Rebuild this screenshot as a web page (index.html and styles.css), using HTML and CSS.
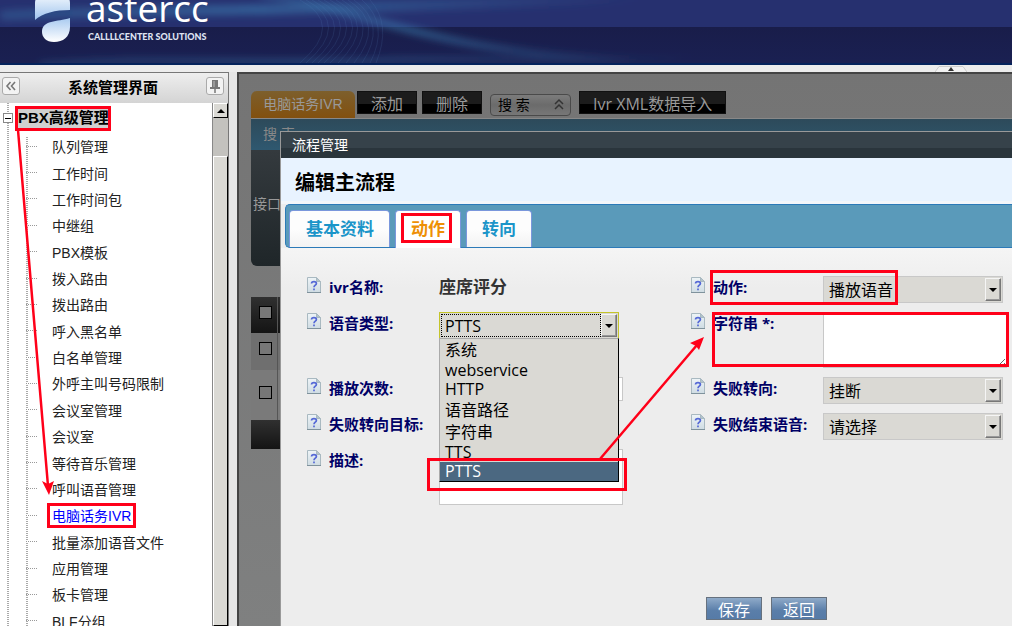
FILE: index.html
```html
<!DOCTYPE html>
<html lang="zh-CN">

<head>
  <meta charset="UTF-8">
  <title>astercc</title>
  <link rel="stylesheet" href="styles.css">
</head>

<body>
  <svg class="symbols" aria-hidden="true">
    <linearGradient id="paper" x2="0" y2="1">
      <stop offset="0" stop-color="#eef4f7" />
      <stop offset="1" stop-color="#cfdce3" />
    </linearGradient>
    <symbol id="help" viewBox="0 0 14 16">
      <path d="M.5 .5H9.500L13.500 4.500V15.500H.5z" fill="url(#paper)" stroke="#a9b9c1" />
      <path d="M9.500 .5V4.500H13.500z" fill="#b3c3cb" stroke="#a9b9c1" />
      <path d="M0 15.500H14" stroke="#7f929c" />
      <path d="M4.500 6.500C4.500 3.900 9.400 3.900 9.400 6.500C9.400 8.200 7 8.200 7 10.300M7 11.500V13.300" fill="none" stroke="#5468d6" stroke-width="1.700" />
    </symbol>
  </svg>

  <header class="banner">
    <svg class="waves" viewBox="0 0 1012 65" preserveAspectRatio="none" aria-hidden="true">
      <defs>
        <linearGradient id="waveFade">
          <stop offset="0" stop-color="#3f86b8" stop-opacity=".3" />
          <stop offset=".4" stop-color="#3f86b8" stop-opacity=".5" />
          <stop offset="1" stop-color="#3f86b8" stop-opacity="0" />
        </linearGradient>
        <filter id="soft" x="-10%" y="-100%" width="120%" height="300%">
          <feGaussianBlur stdDeviation="4" />
        </filter>
      </defs>
      <g filter="url(#soft)" fill="none" stroke="url(#waveFade)">
        <path d="M0 16C120 10 240 12 400 6S560 2 640 -4" stroke-width="11" />
        <path d="M260 -6C360 8 440 58 640 62" stroke-width="8" />
        <path d="M40 66C160 58 240 66 380 62S600 66 700 58" stroke-width="4" />
      </g>
      <g fill="none" stroke="#5c86c0" stroke-opacity=".16">
        <path d="M300 0Q345 25 300 65M306 0Q351 25 306 65M312 0Q357 25 312 65M318 0Q363 25 318 65M324 0Q369 25 324 65M330 0Q375 25 330 65M336 0Q378 25 338 65M342 0Q382 25 346 65M348 0Q386 25 354 65M354 0Q388 25 362 65M362 0Q390 25 370 65M370 0Q392 25 376 65" />
      </g>
    </svg>
    <div class="brand">
      <svg class="brand-mark" viewBox="0 0 36 42" aria-hidden="true">
        <defs>
          <linearGradient id="markTop" x2="0" y2="1">
            <stop offset="0" stop-color="#eef5fc" />
            <stop offset="1" stop-color="#9fc4ee" />
          </linearGradient>
          <linearGradient id="markBottom" x2="0" y2="1">
            <stop offset="0" stop-color="#a8caf0" />
            <stop offset="1" stop-color="#fff" />
          </linearGradient>
        </defs>
        <path d="M0 20V3Q0 0 2 -4H33Q35 0 35 3V10C20 10 8 13 0 20z" fill="url(#markTop)" />
        <path d="M35 18V27C35 37 28 42 19 42C11 42 7 37 7 32C7 20 22 22 35 18z" fill="url(#markBottom)" />
      </svg>
      <div class="brand-text">
        <div class="brand-name">astercc</div>
        <div class="brand-tag">CALLLLCENTER SOLUTIONS</div>
      </div>
    </div>
  </header>

  <div class="divider">
    <button class="collapse-up" aria-label="收起">
      <svg width="32" height="6" viewBox="0 0 32 6"><path d="M0 6L4 .5H28L32 6" fill="#f1f1f1" stroke="#ccc" /><path d="M13 5L16 1L19 5z" fill="#333" /></svg>
    </button>
  </div>

  <div class="layout">
    <aside class="sidebar">
      <div class="sidebar-header">
        <button class="tool" aria-label="折叠">
          <svg width="16" height="16" viewBox="0 0 16 16"><path d="M7.500 4L4 8L7.500 12M12 4L8.500 8L12 12" fill="none" stroke="#777" stroke-width="1.600" /></svg>
        </button>
        <h1>系统管理界面</h1>
        <button class="tool" aria-label="固定">
          <svg width="16" height="16" viewBox="0 0 16 16"><path d="M5 2H11V9H13V11H3V9H5z" fill="#777" /><path d="M7 3V9" stroke="#bbb" /><path d="M8 10V15" stroke="#777" stroke-width="1.500" /></svg>
        </button>
      </div>
      <div class="sidebar-body">
        <nav class="tree">
          <div class="tree-root">
            <button class="toggle" aria-label="收起 PBX高级管理"></button>
            <a href="#">PBX高级管理</a>
          </div>
          <ul class="tree-list">
            <li><a href="#">队列管理</a></li>
            <li><a href="#">工作时间</a></li>
            <li><a href="#">工作时间包</a></li>
            <li><a href="#">中继组</a></li>
            <li><a href="#">PBX模板</a></li>
            <li><a href="#">拨入路由</a></li>
            <li><a href="#">拨出路由</a></li>
            <li><a href="#">呼入黑名单</a></li>
            <li><a href="#">白名单管理</a></li>
            <li><a href="#">外呼主叫号码限制</a></li>
            <li><a href="#">会议室管理</a></li>
            <li><a href="#">会议室</a></li>
            <li><a href="#">等待音乐管理</a></li>
            <li><a href="#">呼叫语音管理</a></li>
            <li><a href="#" class="current">电脑话务IVR</a></li>
            <li><a href="#">批量添加语音文件</a></li>
            <li><a href="#">应用管理</a></li>
            <li><a href="#">板卡管理</a></li>
            <li><a href="#">BLF分组</a></li>
          </ul>
        </nav>
        <div class="scrollbar">
          <button class="scroll-up" aria-label="向上滚动"></button>
          <div class="scroll-thumb"></div>
        </div>
      </div>
    </aside>

    <main class="content">
      <div class="toolbar">
        <a href="#" class="page-tab">电脑话务IVR</a>
        <button class="dark-btn add">添加</button>
        <button class="dark-btn">删除</button>
        <button class="search-btn">搜 索
          <svg width="12" height="12" viewBox="0 0 12 12"><path d="M2 6L6 2L10 6M2 11L6 7L10 11" fill="none" stroke="#333" stroke-width="1.500" /></svg>
        </button>
        <button class="dark-btn">Ivr XML数据导入</button>
      </div>
      <div class="search-title">搜 索</div>
      <div class="search-panel">接口</div>
      <table class="grid">
        <tr class="grid-head"><th><input type="checkbox" aria-label="全选"></th><th></th></tr>
        <tr class="grid-odd"><td><input type="checkbox" aria-label="第1行"></td><td></td></tr>
        <tr class="grid-even"><td><input type="checkbox" aria-label="第2行"></td><td></td></tr>
        <tr class="grid-foot"><td colspan="2"></td></tr>
      </table>

      <section class="dialog" role="dialog" aria-labelledby="dialogTitle">
        <div class="dialog-bar">流程管理</div>
        <h2 id="dialogTitle">编辑主流程</h2>
        <div class="tabs">
          <button class="tab">基本资料</button>
          <button class="tab active">动作</button>
          <button class="tab">转向</button>
        </div>
        <form class="dialog-form">
          <div class="form-grid">
            <svg class="help"><use href="#help" /></svg>
            <span class="label">ivr名称:</span>
            <strong class="value">座席评分</strong>
            <svg class="help"><use href="#help" /></svg>
            <label class="label" for="action">动作:</label>
            <div class="select"><select id="action"><option>播放语音</option></select><i></i></div>

            <svg class="help"><use href="#help" /></svg>
            <label class="label" for="voiceType">语音类型:</label>
            <div class="select open">
              <select id="voiceType"><option>PTTS</option></select><i></i>
              <ul class="options" role="listbox" aria-label="语音类型">
                <li role="option" class="cjk">系统</li>
                <li role="option">webservice</li>
                <li role="option">HTTP</li>
                <li role="option" class="cjk">语音路径</li>
                <li role="option" class="cjk">字符串</li>
                <li role="option">TTS</li>
                <li role="option" class="selected" aria-selected="true">PTTS</li>
              </ul>
            </div>
            <svg class="help"><use href="#help" /></svg>
            <label class="label" for="charString">字符串 *:</label>
            <textarea id="charString"></textarea>

            <svg class="help"><use href="#help" /></svg>
            <label class="label" for="playCount">播放次数:</label>
            <input type="text" id="playCount">
            <svg class="help"><use href="#help" /></svg>
            <label class="label" for="failTurn">失败转向:</label>
            <div class="select"><select id="failTurn"><option>挂断</option></select><i></i></div>

            <svg class="help"><use href="#help" /></svg>
            <label class="label" for="failTarget">失败转向目标:</label>
            <div class="select"><select id="failTarget"><option></option></select><i></i></div>
            <svg class="help"><use href="#help" /></svg>
            <label class="label" for="failVoice">失败结束语音:</label>
            <div class="select"><select id="failVoice"><option>请选择</option></select><i></i></div>

            <svg class="help"><use href="#help" /></svg>
            <label class="label" for="remark">描述:</label>
            <textarea id="remark" class="plain"></textarea>
          </div>
          <div class="actions">
            <button type="button" class="blue-btn">保存</button>
            <button type="button" class="blue-btn">返回</button>
          </div>
        </form>
      </section>
    </main>
  </div>

  <!-- red step marks over the page -->
  <svg class="marks" width="1012" height="626" aria-hidden="true">
    <g fill="none" stroke="#ff0019" stroke-width="3">
      <rect x="16.500" y="107.500" width="93" height="22" />
      <rect x="48.500" y="504.500" width="86" height="22" />
      <rect x="402.500" y="214.500" width="48" height="27" />
      <rect x="711.500" y="271.500" width="185" height="32" />
      <rect x="713.500" y="313.500" width="294" height="52" />
      <rect x="428.500" y="459.500" width="197" height="30" />
      <path d="M18 130L48 486M600 459L697 345" stroke-width="2.500" />
    </g>
    <path d="M49 495L42 481L48 484L54 481zM704 337L699 350L696 346L690 343z" fill="#ff0019" />
  </svg>
</body>

</html>
```

FILE: styles.css
```css
* {
  margin: 0;
  padding: 0;
  box-sizing: border-box;
}

body {
  display: flex;
  flex-direction: column;
  position: relative;
  height: 100vh;
  overflow: hidden;
  background: #ececec;
  font-family: "Liberation Sans", "Noto Sans CJK SC", sans-serif;
  font-size: 14px;
  color: #222;
}

a {
  color: inherit;
  text-decoration: none;
}

ul {
  list-style: none;
}

button,
input,
select,
textarea {
  font: inherit;
  color: inherit;
}

.symbols {
  position: absolute;
  width: 0;
  height: 0;
}

/* Banner */
.banner {
  position: relative;
  flex: none;
  height: 65px;
  overflow: hidden;
  background: linear-gradient(#26306f 27px, #191d4a 27px, #1a2052);
  border-bottom: 2px solid #05235c;
}

.waves {
  position: absolute;
  inset: 0;
  width: 100%;
  height: 100%;
}

.brand {
  position: relative;
  display: flex;
  gap: 15px;
  padding-left: 35px;
  color: #fff;
}

.brand-mark {
  width: 36px;
  height: 42px;
}

.brand-text {
  margin-top: -16px;
  font-family: "Open Sans", sans-serif;
}

.brand-name {
  font-size: 37px;
  line-height: 48px;
}

.brand-tag {
  padding-left: 2px;
  color: #dfe3f2;
  font-family: Lato, sans-serif;
  font-size: 9px;
  font-weight: 900;
  line-height: 10px;
}

.divider {
  display: flex;
  flex: none;
  justify-content: flex-end;
  align-items: flex-end;
  height: 7px;
  padding-right: 45px;
}

.collapse-up {
  display: flex;
  border: none;
  background: none;
}

/* Sidebar */
.layout {
  display: flex;
  flex: 1;
  min-height: 0;
  gap: 8px;
  background: #e6e6e6;
}

.sidebar {
  display: flex;
  flex-direction: column;
  flex: none;
  width: 229px;
  border: 1px solid #777;
  border-width: 1px 1px 0 0;
  background: #fff;
}

.sidebar-header {
  display: flex;
  flex: none;
  align-items: center;
  justify-content: space-between;
  height: 30px;
  padding: 0 4px 4px 2px;
  background: linear-gradient(#eee, #d4d4d4);
}

.sidebar-header h1 {
  font-size: 15px;
  color: #000;
}

.tool {
  display: flex;
  border: 1px solid #aaa;
  border-radius: 3px;
  background: #f3f3f3;
}

.sidebar-body {
  display: flex;
  flex: 1;
  min-height: 0;
}

.tree {
  flex: 1;
  overflow: hidden;
  padding-top: 4px;
  background: repeating-linear-gradient(#aaa 0 1px, #fff 1px 2px) 7px 0 / 2px 100% no-repeat;
}

.tree-root {
  display: flex;
  align-items: center;
  gap: 5px;
  height: 22px;
  padding-left: 3px;
  font-size: 15px;
  font-weight: 700;
  color: #000;
}

.tree-root a {
  line-height: 22px;
  background: #d0d0d0;
}

.toggle {
  width: 10px;
  height: 10px;
  border: 1px solid #888;
  background: linear-gradient(#000, #000) center / 6px 1px no-repeat #fff;
}

.tree-list {
  display: grid;
  grid-auto-rows: 1fr;
  height: 501px;
  margin: 4px 0 0 26px;
  background: repeating-linear-gradient(#aaa 0 1px, #fff 1px 2px) 0 4px / 2px 100% no-repeat;
}

.tree-list li {
  display: flex;
  align-items: center;
  gap: 15px;
}

.tree-list li::before {
  content: "";
  width: 11px;
  height: 1px;
  background: repeating-linear-gradient(90deg, #999 0 1px, #fff 1px 2px);
}

.current {
  color: #00f;
}

.scrollbar {
  display: flex;
  flex-direction: column;
  gap: 38px;
  width: 16px;
  background: #c3c2be;
  border-left: 1px solid #888;
}

.scroll-up {
  flex: none;
  height: 15px;
  border: 1px solid;
  border-color: #fff #000 #000 #fff;
  background: #dad9d4;
}

.scroll-up::before {
  content: "";
  display: block;
  width: 0;
  margin: 0 auto;
  border: 4px solid transparent;
  border-top: none;
  border-bottom-color: #000;
}

.scroll-thumb {
  flex: 1;
  border: 1px solid;
  border-color: #fff #000 #000 #fff;
  background: #dad9d4;
}

/* Page behind the dialog */
.content {
  position: relative;
  flex: 1;
  overflow: hidden;
  border: 2px solid #444;
  border-width: 2px 0 0 2px;
  padding: 17px 0 0 12px;
  background: linear-gradient(#747474, #7f8080);
}

.toolbar {
  display: flex;
  align-items: flex-start;
  height: 28px;
  border-bottom: 1px solid #888;
  font-family: "Open Sans", "Noto Sans CJK SC", sans-serif;
  font-size: 16px;
}

.page-tab {
  width: 104px;
  margin-right: -3px;
  border-radius: 6px 6px 0 0;
  background: linear-gradient(#7d5f2c, #82500f);
  color: #999;
  font-family: "Liberation Sans", "Noto Sans CJK SC", sans-serif;
  font-size: 14px;
  line-height: 27px;
  text-align: center;
}

.dark-btn {
  height: 23px;
  margin-left: 5px;
  padding: 0 13px;
  border: 1px solid #111;
  background: linear-gradient(#1c1c1c 55%, #000 55%);
  color: #999;
  line-height: 24px;
}

.search-btn {
  display: flex;
  align-items: center;
  justify-content: space-between;
  width: 81px;
  height: 22px;
  margin: 3px 3px 0 8px;
  padding: 0 5px 2px 7px;
  border: 1px solid #4a4a4a;
  border-radius: 4px;
  background: linear-gradient(#7c7c7c, #6b6b6b 50%, #777);
  color: #000;
  font-size: 14px;
}

.search-title {
  height: 31px;
  padding-left: 12px;
  background: linear-gradient(#2d4a5a, #2f5870);
  color: #888;
  line-height: 30px;
}

.search-panel {
  height: 116px;
  padding-left: 2px;
  border-radius: 0 0 0 6px;
  background: linear-gradient(#343a3e, #1f2629);
  color: #999;
  line-height: 108px;
}

.grid {
  width: 100%;
  margin-top: 31px;
  border-collapse: collapse;
}

.grid th,
.grid td {
  text-align: left;
  vertical-align: top;
  padding: 9px 0 0 8px;
}

.grid th:first-child,
.grid td:first-child {
  width: 26px;
  border-right: 1px solid #555;
}

.grid input {
  display: block;
  appearance: none;
  width: 13px;
  height: 13px;
  border: 1px solid #000;
  background: #777;
}

.grid-head {
  height: 36px;
  background: linear-gradient(#303030, #141414);
}

.grid-odd {
  height: 37px;
  background: #6f6f6f;
}

.grid-even {
  height: 50px;
  background: #7a7a7a;
}

.grid-even td {
  padding-top: 16px;
}

.grid-foot {
  height: 29px;
  background: linear-gradient(#303030, #141414);
}

/* Dialog */
.dialog {
  position: absolute;
  top: 57px;
  right: 0;
  bottom: 0;
  left: 41px;
  border: 1px solid #999;
  border-width: 1px 0 0 1px;
  background: #ededed;
  font-family: "Open Sans", "Noto Sans CJK SC", sans-serif;
}

.dialog-bar {
  height: 26px;
  padding-left: 11px;
  background: linear-gradient(#36424a 62%, #2a353c 62%);
  color: #fff;
  font-size: 14px;
  line-height: 26px;
}

.dialog h2 {
  height: 46px;
  padding-left: 14px;
  border-bottom: 3px solid #f3f6fa;
  background: #e8f3ff;
  color: #000;
  font-size: 20px;
  line-height: 50px;
}

.tabs {
  display: flex;
  gap: 5px;
  height: 44px;
  margin-left: 4px;
  padding: 5px 0 0 3px;
  border: 1px solid #2c7ab8;
  border-right: none;
  border-radius: 5px 0 0 5px;
  background: #5a9aba;
}

.tab {
  height: 37px;
  padding: 0 15px 4px;
  border: 1px solid #7a97dc;
  border-bottom: none;
  border-radius: 4px 4px 0 0;
  background: linear-gradient(#fdfdfd 50%, #f3f3f3);
  color: #1b95c9;
  font-size: 17px;
  font-weight: 700;
}

.tab:first-child {
  padding-left: 16px;
}

.active {
  height: 38px;
  background: #fff;
  color: #ee9005;
}

.dialog-form {
  padding: 28px 0 0 26px;
  background: linear-gradient(#f5f5f5, #ededed 40px);
}

.form-grid {
  display: grid;
  grid-template-columns: 22px 110px 252px 22px 110px 1fr;
  grid-template-rows: 36px 65px 36px 36px 56px;
  align-items: start;
  font-size: 16px;
}

.help {
  width: 14px;
  height: 16px;
  margin-top: 1px;
}

.label {
  color: #000066;
  font-size: 15px;
  font-weight: 700;
  line-height: 22px;
}

.value {
  color: #333;
  font-size: 17px;
  line-height: 22px;
}

.select {
  position: relative;
  display: flex;
  width: 180px;
  height: 27px;
  padding: 1px;
  border: 1px solid #c8c8c8;
  background: #dad9d4;
}

.select select {
  flex: 1;
  appearance: none;
  border: none;
  outline: none;
  padding-left: 4px;
  background: none;
  color: #000;
}

.select i {
  display: flex;
  align-items: center;
  justify-content: center;
  width: 16px;
  border: 1px solid;
  border-color: #f5f5f5 #777 #777 #f5f5f5;
  box-shadow: inset -1px -1px #999;
}

.select i::before {
  content: "";
  border: 4px solid transparent;
  border-top-color: #000;
  border-bottom: none;
}

.open {
  border-color: #c5c52a;
}

.open select {
  padding: 0 0 2px 3px;
  border: 1px dotted #000;
}

.options {
  position: absolute;
  z-index: 1;
  top: 25px;
  right: -1px;
  left: -1px;
  border: 1px solid #000;
  border-color: #aaa #000 #000 #aaa;
  background: #dad9d4;
  color: #000;
}

.options li {
  height: 19px;
  padding-left: 5px;
  line-height: 19px;
}

.options .cjk {
  height: 22px;
  line-height: 22px;
}

.options .selected {
  background: #4b6881;
  color: #fff;
}

.form-grid input,
.form-grid textarea {
  width: 184px;
  border: 1px solid #c8c8c8;
  background: #fff;
}

.form-grid input {
  height: 24px;
}

.form-grid textarea {
  height: 56px;
}

.form-grid .plain {
  resize: none;
}

.actions {
  display: flex;
  gap: 9px;
  margin-top: 92px;
  padding-left: 399px;
}

.blue-btn {
  height: 23px;
  padding: 0 11px;
  border: 1px solid #66717e;
  background: linear-gradient(#8faac9, #5a7ea9 60%, #567ba7);
  color: #fff;
  font-size: 16px;
  line-height: 24px;
}

.marks {
  position: absolute;
  top: 0;
  left: 0;
  z-index: 2;
  pointer-events: none;
}
```
